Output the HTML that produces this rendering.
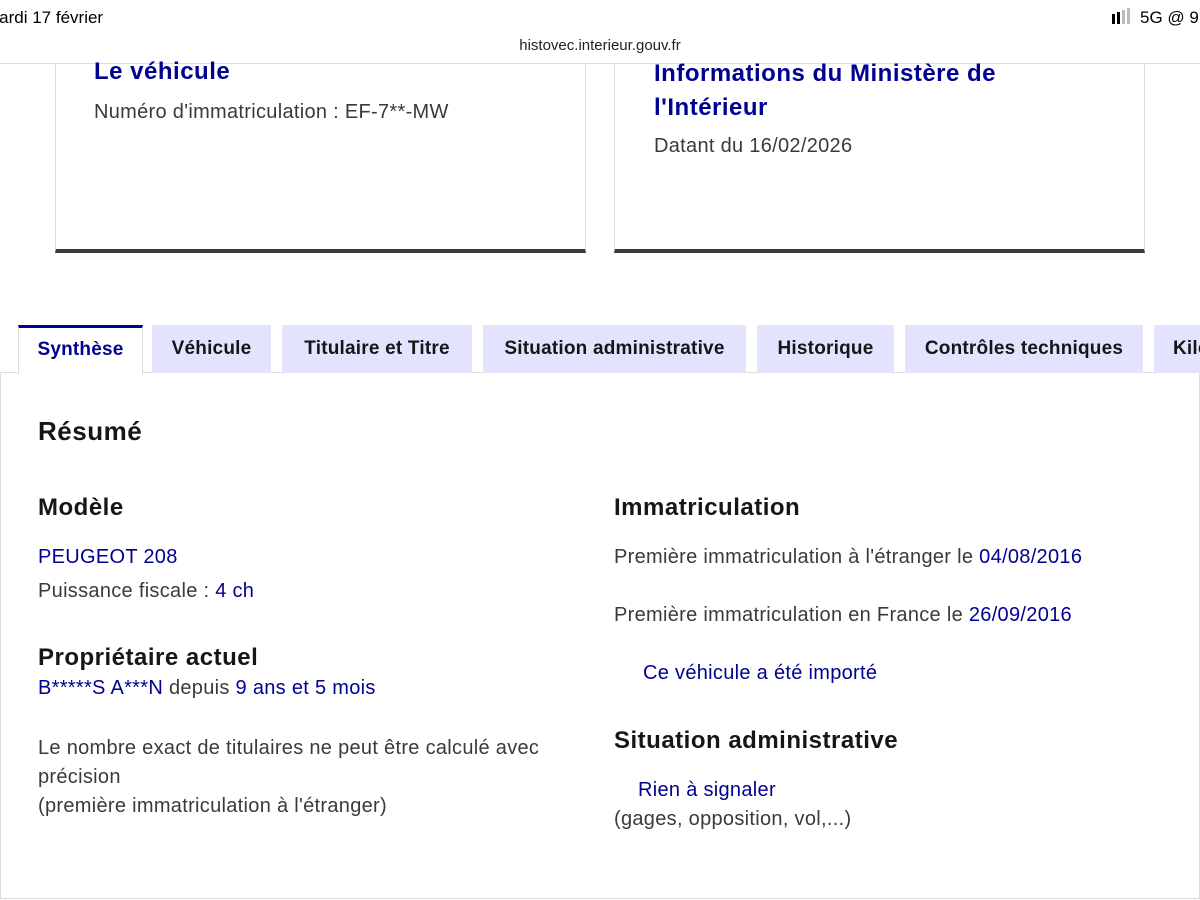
<!DOCTYPE html>
<html><head><meta charset="utf-8"><style>
*{margin:0;padding:0;box-sizing:border-box}
body{width:1200px;height:900px;overflow:hidden;background:#fff;font-family:"Liberation Sans",sans-serif;position:relative;color:#3a3a3a}
.a{position:absolute;white-space:nowrap}
.b{color:#000091}
.t{font-size:20px;line-height:24px;letter-spacing:0.3px}
.h{font-size:24px;font-weight:bold;color:#161616;letter-spacing:0.5px}
.tab{position:absolute;top:325px;height:48px;background:#e3e3fd;font-size:19px;font-weight:bold;color:#161616;text-align:center;line-height:48px;letter-spacing:0.2px;overflow:hidden}
</style></head><body>
<div class="a" style="left:-15px;top:8px;font-size:17px;color:#000">Mardi 17 février</div>
<div class="a" style="left:1112px;top:14px;width:3px;height:10px;background:#000"></div>
<div class="a" style="left:1117px;top:12px;width:3px;height:12px;background:#000"></div>
<div class="a" style="left:1122px;top:10px;width:3px;height:14px;background:#bbb"></div>
<div class="a" style="left:1127px;top:8px;width:3px;height:16px;background:#bbb"></div>
<div class="a" style="left:1140px;top:8px;font-size:17px;color:#000">5G @ 9</div>
<div class="a" style="left:0;width:1200px;top:37px;text-align:center;font-size:15px;color:#222">histovec.interieur.gouv.fr</div>
<div class="a" style="left:0;top:63px;width:1200px;height:1px;background:#ddd"></div>

<div class="a" style="left:55px;top:64px;width:531px;height:189px;border:1px solid #ddd;border-top:none;border-bottom:4px solid #3a3a3a"></div>
<div class="a" style="left:614px;top:64px;width:531px;height:189px;border:1px solid #ddd;border-top:none;border-bottom:4px solid #3a3a3a"></div>
<div class="a b" style="left:94px;top:58px;font-size:24px;font-weight:bold;letter-spacing:0.5px">Le véhicule</div>
<div class="a t" style="left:94px;top:100px">Numéro d'immatriculation : EF-7**-MW</div>
<div class="a b" style="left:654px;top:57px;font-size:24px;font-weight:bold;line-height:34px;letter-spacing:0.5px">Informations du Ministère de<br>l'Intérieur</div>
<div class="a t" style="left:654px;top:134px">Datant du 16/02/2026</div>

<div class="a" style="left:0;top:372px;width:1200px;height:527px;border:1px solid #ddd"></div>
<div class="tab" style="left:18px;width:125px;background:#fff;border:1px solid #ddd;border-bottom:none;border-top:3px solid #000091;color:#000091;line-height:44px;height:49px">Synthèse</div>
<div class="tab" style="left:152px;width:119px">Véhicule</div>
<div class="tab" style="left:282px;width:190px">Titulaire et Titre</div>
<div class="tab" style="left:483px;width:263px">Situation administrative</div>
<div class="tab" style="left:757px;width:137px">Historique</div>
<div class="tab" style="left:905px;width:238px">Contrôles techniques</div>
<div class="tab" style="left:1154px;width:46px;text-align:left;padding-left:19px">Kilométrage</div>

<div class="a h" style="left:38px;top:416px;font-size:26px">Résumé</div>
<div class="a h" style="left:38px;top:494px">Modèle</div>
<div class="a t b" style="left:38px;top:545px">PEUGEOT 208</div>
<div class="a t" style="left:38px;top:579px">Puissance fiscale : <span class="b">4 ch</span></div>
<div class="a h" style="left:38px;top:644px">Propriétaire actuel</div>
<div class="a t" style="left:38px;top:676px"><span class="b">B*****S A***N</span> depuis <span class="b">9 ans et 5 mois</span></div>
<div class="a t" style="left:38px;top:734px;line-height:29px">Le nombre exact de titulaires ne peut être calculé avec<br>précision<br>(première immatriculation à l'étranger)</div>

<div class="a h" style="left:614px;top:494px">Immatriculation</div>
<div class="a t" style="left:614px;top:545px">Première immatriculation à l'étranger le <span class="b">04/08/2016</span></div>
<div class="a t" style="left:614px;top:603px">Première immatriculation en France le <span class="b">26/09/2016</span></div>
<div class="a t b" style="left:643px;top:661px">Ce véhicule a été importé</div>
<div class="a h" style="left:614px;top:727px">Situation administrative</div>
<div class="a t b" style="left:638px;top:778px">Rien à signaler</div>
<div class="a t" style="left:614px;top:807px">(gages, opposition, vol,...)</div>
</body></html>
